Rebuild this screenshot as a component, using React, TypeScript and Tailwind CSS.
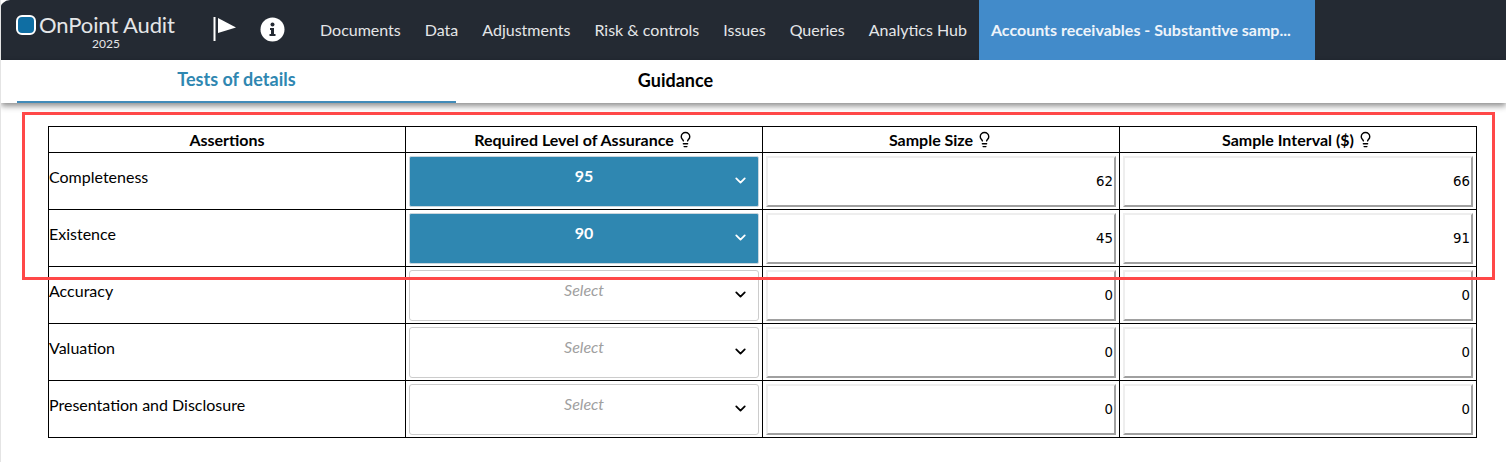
import { ChevronDown, Lightbulb } from "lucide-react";

const navItems = ["Documents", "Data", "Adjustments", "Risk & controls", "Issues", "Queries", "Analytics Hub"];

const rows = [
  { name: "Completeness", level: "95", size: "62", interval: "66" },
  { name: "Existence", level: "90", size: "45", interval: "91" },
  { name: "Accuracy", level: "", size: "0", interval: "0" },
  { name: "Valuation", level: "", size: "0", interval: "0" },
  { name: "Presentation and Disclosure", level: "", size: "0", interval: "0" },
];

function HeadCell({ label, hint }: { label: string; hint?: boolean }) {
  return (
    <th className="h-[26px] border border-black p-0 text-center text-[16px] leading-none font-bold text-black">
      <span className="inline-flex items-center justify-center gap-[3px]">
        {label}
        {hint && <Lightbulb size={17} strokeWidth={2} className="text-black" />}
      </span>
    </th>
  );
}

function LevelSelect({ value }: { value: string }) {
  if (value) {
    return (
      <div className="relative mx-[3px] flex h-[51px] justify-center rounded-[2px] border border-[#c9d6de] bg-[#2f87b1] pt-[9px] text-[16px] leading-[20px] font-bold text-white">
        {value}
        <ChevronDown size={17} strokeWidth={2.5} className="absolute top-[15px] right-[9px] text-white" />
      </div>
    );
  }
  return (
    <div className="relative mx-[3px] flex h-[51px] justify-center rounded-[3px] border border-[#cccccc] bg-white pt-[9px] text-[16px] leading-[20px] text-[#a0a0a0] italic">
      Select
      <ChevronDown size={17} strokeWidth={2.5} className="absolute top-[15px] right-[9px] text-black" />
    </div>
  );
}

function NumberBox({ value }: { value: string }) {
  return (
    <div className="mx-[3px] flex h-[51px] items-center justify-end border-t-2 border-r-2 border-b-2 border-l-2 border-t-[#eeeeee] border-r-[#a0a0a0] border-b-[#a0a0a0] border-l-[#eeeeee] bg-white pt-[1px] pr-[1px] font-['DejaVu_Sans',sans-serif] text-[13.3px] text-black">
      {value}
    </div>
  );
}

export default function App() {
  return (
    <div className="relative h-[462px] w-[1506px] overflow-hidden border-l border-[#e4e4e4] bg-white font-['Lato',sans-serif]">
      {/* top bar */}
      <nav className="flex h-[60px] items-stretch rounded-tl-[10px] bg-[#242a33] text-[#e4e6e8] -ml-px">
        <div className="flex w-[200px] shrink-0 flex-col pl-[16px]">
          <div className="flex items-center gap-[3px] pt-[13px]">
            <span className="h-[20px] w-[20px] rounded-[6px] border-2 border-white bg-[#0f6ea3]" />
            <span className="text-[22px] leading-[24px] tracking-[-0.1px]">OnPoint Audit</span>
          </div>
          <span className="ml-[76px] text-[12px] leading-[14px]">2025</span>
        </div>
        <div className="flex w-[108px] shrink-0 items-center pb-[2px] pl-[13px]">
          <svg width="24" height="26" viewBox="0 0 24 26" fill="none">
            <rect x="0.5" y="1" width="2" height="24" fill="#ffffff" />
            <path d="M5 2 L23 11.5 L5 17 Z" fill="#ffffff" />
          </svg>
          <svg width="25" height="25" viewBox="0 0 25 25" className="ml-[23px]">
            <circle cx="12.5" cy="12.5" r="12" fill="#ffffff" />
            <circle cx="12.5" cy="7.5" r="2" fill="#242a33" />
            <path d="M10 11 H14 V17 H15.5 V19 H9.5 V17 H11 V13 H10 Z" fill="#242a33" />
          </svg>
        </div>
        {navItems.map((item) => (
          <a key={item} className="flex items-center px-3 text-[16px] whitespace-nowrap">
            {item}
          </a>
        ))}
        <a className="flex w-[336px] items-center bg-[#428bca] px-3 text-[16px] font-bold whitespace-nowrap text-[#eef4fa]">
          Accounts receivables - Substantive samp...
        </a>
      </nav>

      {/* tabs */}
      <div className="flex h-[43px] pl-[16px] shadow-[0_3px_6px_rgba(0,0,0,0.45)]">
        <button type="button" className="h-[43px] w-[439px] border-b-2 border-[#428bb8] pb-[2px] text-[18px] font-bold text-[#2f87b1]">
          Tests of details
        </button>
        <button type="button" className="h-[43px] w-[439px] pb-[2px] text-[18px] font-bold text-black">
          Guidance
        </button>
      </div>

      {/* assertions table */}
      <div className="pt-[23px] pl-[47px]">
        <table className="w-[1429px] table-fixed border-collapse border border-black">
          <thead>
            <tr>
              <HeadCell label="Assertions" />
              <HeadCell label="Required Level of Assurance" hint />
              <HeadCell label="Sample Size" hint />
              <HeadCell label="Sample Interval ($)" hint />
            </tr>
          </thead>
          <tbody>
            {rows.map((row) => (
              <tr key={row.name} className="h-[57px]">
                <td className="border border-black p-0 pt-[14px] align-top text-[16px] leading-[20px] text-black">{row.name}</td>
                <td className="border border-black p-0 align-middle">
                  <LevelSelect value={row.level} />
                </td>
                <td className="border border-black p-0 align-middle">
                  <NumberBox value={row.size} />
                </td>
                <td className="border border-black p-0 align-middle">
                  <NumberBox value={row.interval} />
                </td>
              </tr>
            ))}
          </tbody>
        </table>
      </div>

      {/* red highlight drawn over the screenshot */}
      <div className="absolute top-[112px] left-[21px] h-[168px] w-[1473px] border-3 border-[#ff4848]" />
    </div>
  );
}
